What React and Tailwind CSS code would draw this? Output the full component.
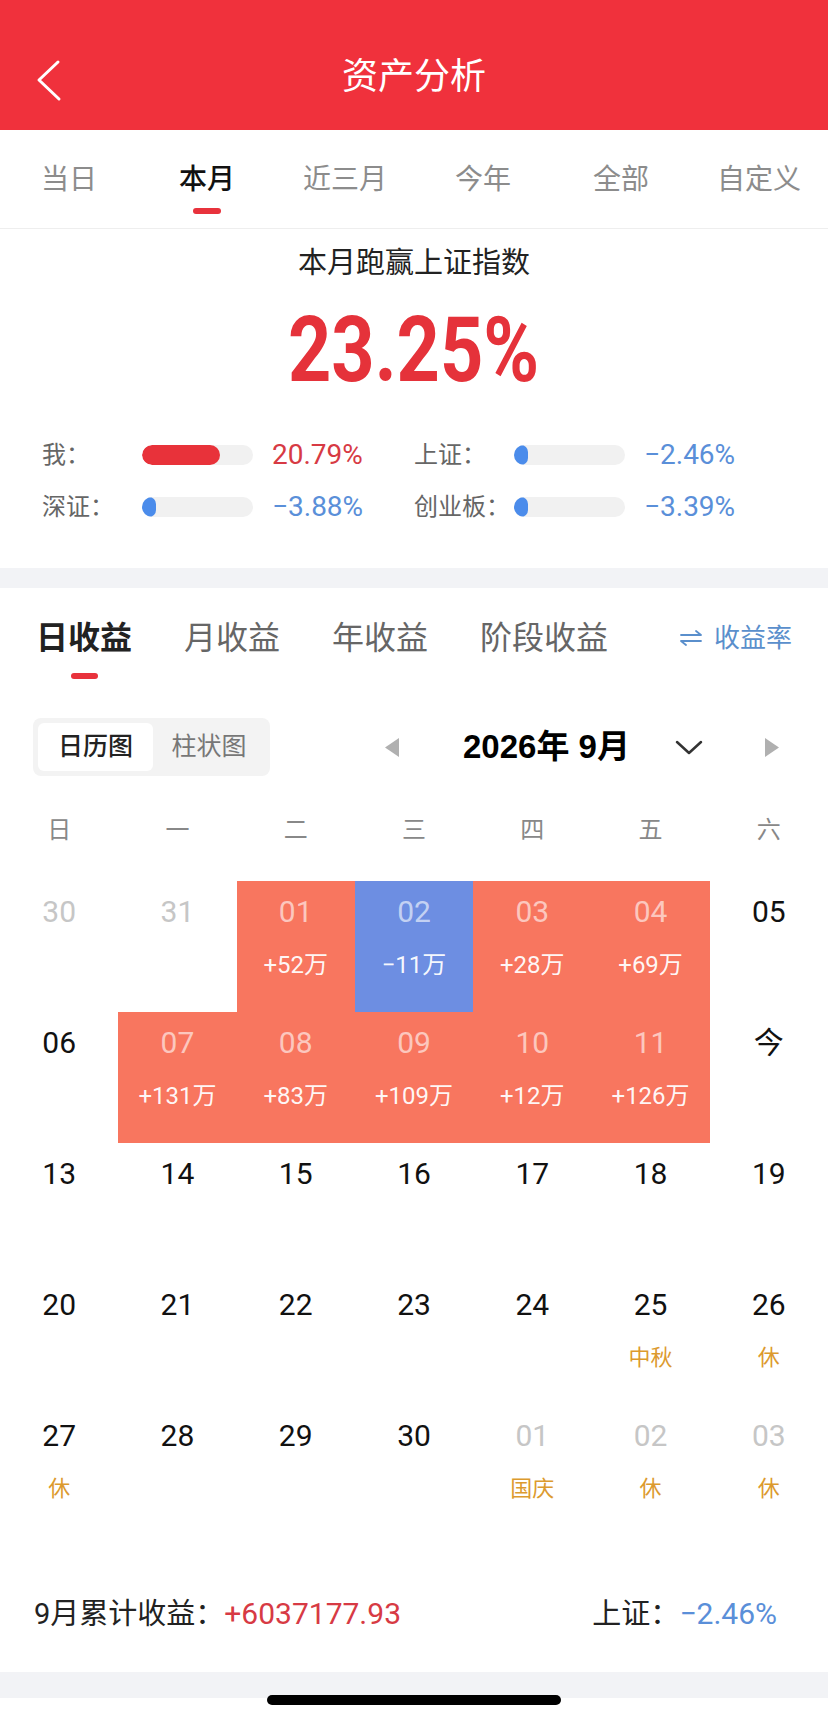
import React from 'react';

const topTabs = ['当日', '本月', '近三月', '今年', '全部', '自定义'];
const weekdays = ['日', '一', '二', '三', '四', '五', '六'];

// 9月 calendar cells, 5 rows x 7 cols
const days = [
    { d: '30', muted: true },
    { d: '31', muted: true },
    { d: '01', v: '+52万', up: true },
    { d: '02', v: '−11万', down: true },
    { d: '03', v: '+28万', up: true },
    { d: '04', v: '+69万', up: true },
    { d: '05' },
    { d: '06' },
    { d: '07', v: '+131万', up: true },
    { d: '08', v: '+83万', up: true },
    { d: '09', v: '+109万', up: true },
    { d: '10', v: '+12万', up: true },
    { d: '11', v: '+126万', up: true },
    { d: '今' },
    { d: '13' },
    { d: '14' },
    { d: '15' },
    { d: '16' },
    { d: '17' },
    { d: '18' },
    { d: '19' },
    { d: '20' },
    { d: '21' },
    { d: '22' },
    { d: '23' },
    { d: '24' },
    { d: '25', tag: '中秋' },
    { d: '26', tag: '休' },
    { d: '27', tag: '休' },
    { d: '28' },
    { d: '29' },
    { d: '30' },
    { d: '01', muted: true, tag: '国庆' },
    { d: '02', muted: true, tag: '休' },
    { d: '03', muted: true, tag: '休' },
];

const compares = [
    { label: '我：', fill: '70%', value: '20.79%', up: true },
    { label: '上证：', fill: '14px', value: '−2.46%' },
    { label: '深证：', fill: '14px', value: '−3.88%' },
    { label: '创业板：', fill: '14px', value: '−3.39%' },
];

const CompareRow = ({ item }) => (
    <div className="flex items-center h-[36px]">
        <span className="w-[100px] text-[24px] leading-[36px] text-[#666]">{item.label}</span>
        <div className="w-[111px] h-[20px] rounded-full bg-[#F1F1F1] overflow-hidden">
            <div
                className={`h-full rounded-full ${item.up ? 'bg-[#E8323A]' : 'bg-[#4B8CEB]'}`}
                style={{ width: item.fill }}
            />
        </div>
        <span className={`ml-[19px] text-[28px] leading-[36px] ${item.up ? 'text-[#D73A44]' : 'text-[#5A8FD9]'}`}>
            {item.value}
        </span>
    </div>
);

const DayCell = ({ day }) => {
    const bg = day.up ? 'bg-[#F8765F]' : day.down ? 'bg-[#6D8EE2]' : 'bg-white';
    const numColor = day.v ? 'text-white/60' : day.muted ? 'text-[#C6C6C6]' : 'text-[#111]';
    return (
        <div className={`h-[131px] flex flex-col items-center pt-[13px] ${bg}`}>
            <span className={`text-[30px] leading-[36px] ${numColor}`}>{day.d}</span>
            {day.v && <span className="mt-[20px] text-[24px] leading-[30px] text-white/95">{day.v}</span>}
            {day.tag && <span className="mt-[20px] text-[22px] leading-[30px] text-[#DC9A2E]">{day.tag}</span>}
        </div>
    );
};

const App = () => {
    return (
        <div className="relative w-[828px] min-h-[1721px] bg-white font-[Roboto,'Noto_Sans_CJK_SC',sans-serif] overflow-hidden">
            {/* Nav bar */}
            <div className="h-[130px] pt-[52px] bg-[#F0313C]">
                <div className="h-[50px] grid grid-cols-[1fr_auto_1fr] items-center">
                    <svg width="30" height="50" viewBox="0 0 30 50" className="ml-[34px]">
                        <polyline points="24,10 5,28 25,47" fill="none" stroke="#fff" strokeWidth="3" strokeLinecap="round" strokeLinejoin="round" />
                    </svg>
                    <h1 className="text-[36px] leading-[50px] text-white">资产分析</h1>
                    <div />
                </div>
            </div>

            {/* Period tabs */}
            <div className="h-[99px] grid grid-cols-6 border-b border-[#EEEEEE]">
                {topTabs.map((t, i) => (
                    <div key={t} className="flex flex-col items-center pt-[32px]">
                        <span className={`text-[28px] leading-[36px] ${i === 1 ? 'text-[#111] font-medium' : 'text-[#8C8C8C]'}`}>{t}</span>
                        {i === 1 && <div className="mt-[10px] w-[28px] h-[6px] rounded-full bg-[#E8323C]" />}
                    </div>
                ))}
            </div>

            {/* Summary */}
            <div className="pt-[14px] flex flex-col items-center">
                <p className="text-[29px] leading-[40px] text-[#222]">本月跑赢上证指数</p>
                <div className="mt-[18px] h-[100px] flex justify-center">
                    <span className="inline-block scale-x-[0.84] text-[90px] leading-[100px] font-bold text-[#E5323A]">23.25%</span>
                </div>
            </div>
            <div className="mt-[36px] pb-[43px] px-[42px] grid grid-cols-[372px_372px] gap-y-[16px]">
                {compares.map((c) => (
                    <CompareRow key={c.label} item={c} />
                ))}
            </div>

            <div className="h-[20px] bg-[#F2F3F6]" />

            {/* Earnings section */}
            <div className="pt-[30px] px-[36px] flex items-start">
                <div className="flex flex-col items-center">
                    <span className="text-[32px] leading-[40px] font-bold text-[#222]">日收益</span>
                    <div className="mt-[15px] w-[27px] h-[6px] rounded-full bg-[#E8323C]" />
                </div>
                <span className="ml-[52px] text-[32px] leading-[40px] text-[#666]">月收益</span>
                <span className="ml-[52px] text-[32px] leading-[40px] text-[#666]">年收益</span>
                <span className="ml-[52px] text-[32px] leading-[40px] text-[#666]">阶段收益</span>
                <div className="ml-auto h-[40px] flex items-center text-[#5A8FCC]">
                    <svg width="22" height="16" viewBox="0 0 22 16">
                        <path d="M1 5H21L16 1M21 11H1L6 15" fill="none" stroke="#5A8FCC" strokeWidth="1.8" strokeLinecap="round" strokeLinejoin="round" />
                    </svg>
                    <span className="ml-[12px] text-[26px] leading-[40px]">收益率</span>
                </div>
            </div>

            {/* Toggle + month */}
            <div className="mt-[39px] px-[33px] h-[58px] flex items-center">
                <div className="w-[237px] h-[58px] p-[5px] rounded-lg bg-[#F3F3F3] flex">
                    <div className="w-[115px] h-full rounded-md bg-white flex items-center justify-center text-[25px] font-medium text-[#222]">日历图</div>
                    <div className="flex-1 flex items-center justify-center text-[25px] text-[#777]">柱状图</div>
                </div>
                <svg width="14" height="19" viewBox="0 0 14 19" className="ml-[115px]">
                    <polygon points="14,0 0,9.5 14,19" fill="#B0B0B0" />
                </svg>
                <span className="ml-[64px] w-[166px] text-[33px] leading-[40px] font-bold text-black font-['Liberation_Sans','Noto_Sans_CJK_SC',sans-serif] whitespace-nowrap">2026年 9月</span>
                <svg width="28" height="15" viewBox="0 0 28 15" className="ml-[46px]">
                    <polyline points="2,2 14,13 26,2" fill="none" stroke="#333" strokeWidth="2.5" strokeLinecap="round" strokeLinejoin="round" />
                </svg>
                <svg width="14" height="19" viewBox="0 0 14 19" className="ml-[62px]">
                    <polygon points="0,0 14,9.5 0,19" fill="#B0B0B0" />
                </svg>
            </div>

            {/* Calendar */}
            <div className="mt-[34px] grid grid-cols-7 h-[40px] items-center">
                {weekdays.map((w) => (
                    <span key={w} className="text-center text-[24px] leading-[40px] text-[#888]">{w}</span>
                ))}
            </div>
            <div className="mt-[31px] grid grid-cols-7">
                {days.map((day, i) => (
                    <DayCell key={i} day={day} />
                ))}
            </div>

            {/* Month total */}
            <div className="pt-[60px] pb-[40px] pl-[34px] pr-[51px] flex items-center h-[136px]">
                <span className="text-[29px] leading-[36px] text-[#222]">9月累计收益：</span>
                <span className="text-[30px] leading-[36px] text-[#D73A44]">+6037177.93</span>
                <span className="ml-auto text-[29px] leading-[36px] text-[#222]">上证：</span>
                <span className="text-[30px] leading-[36px] text-[#5A8FD9]">−2.46%</span>
            </div>
            <div className="h-[26px] bg-[#F2F3F6]" />
            <div className="h-[23px]" />

            {/* Home indicator */}
            <div className="absolute bottom-[16px] left-1/2 -translate-x-1/2 w-[294px] h-[10px] rounded-full bg-black" />
        </div>
    );
};

export default App;
